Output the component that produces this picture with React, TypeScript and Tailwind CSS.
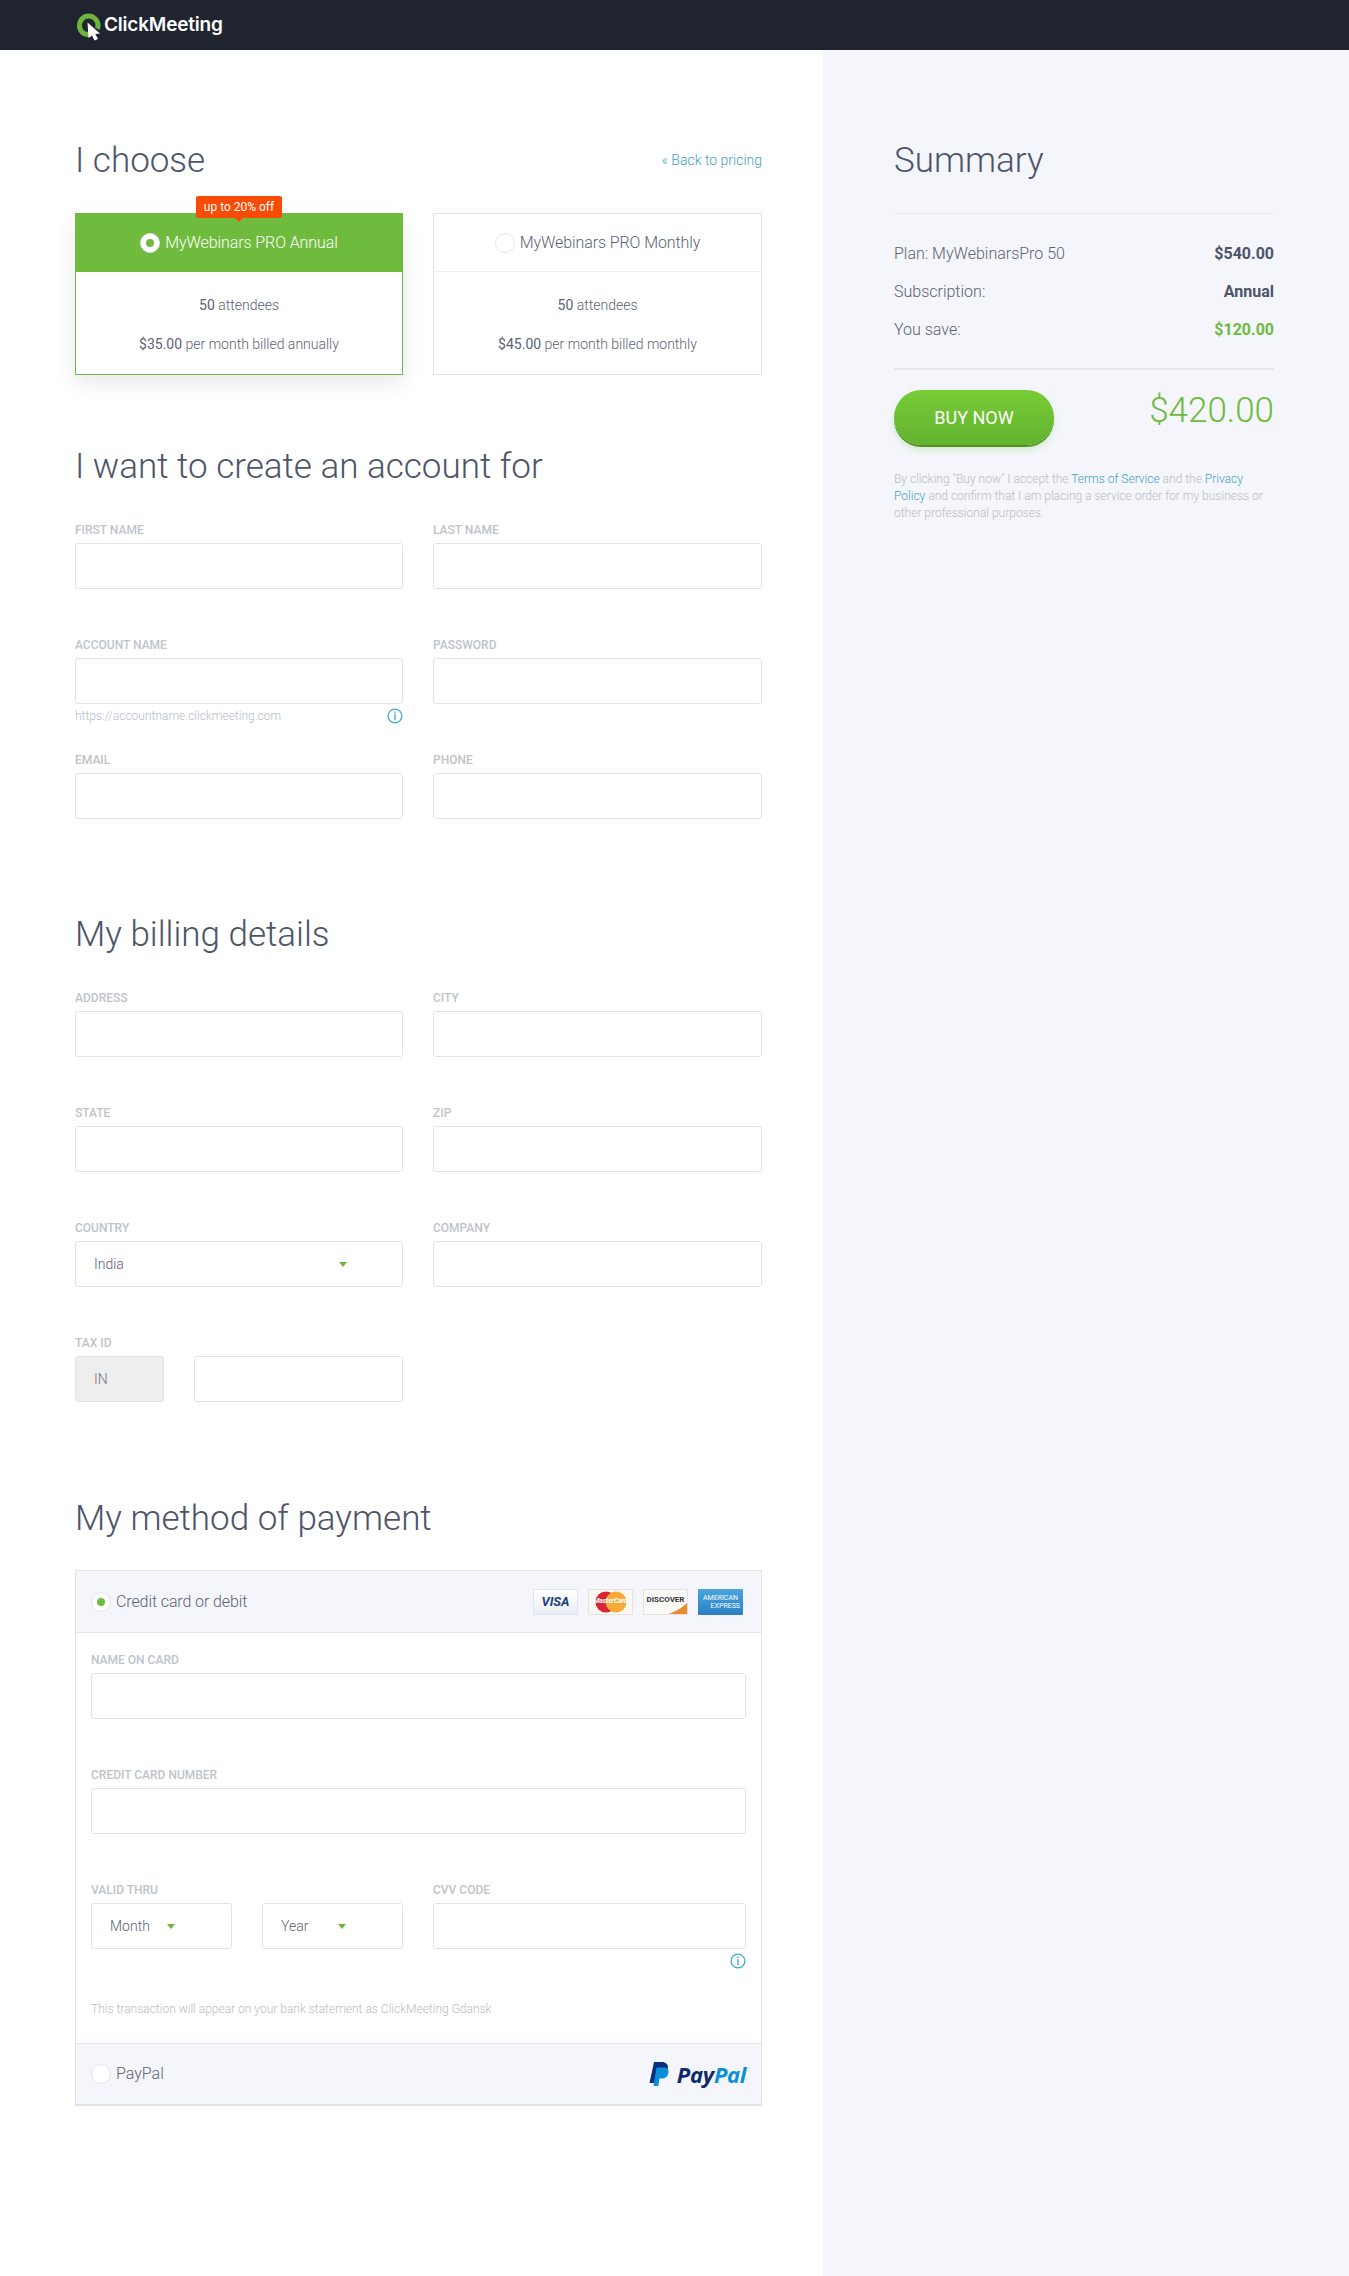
import React from 'react';

const Label = ({ children }: { children: React.ReactNode }) => (
    <div className="h-[14px] mb-[6px] text-[12px] leading-[14px] font-medium uppercase text-[#c0c3ca]">{children}</div>
);

const Input = () => (
    <input className="block w-full h-[46px] bg-white border border-[#e1e3e7] rounded-[3px] outline-none" />
);

const Info = () => (
    <svg width="16" height="16" viewBox="0 0 16 16" fill="none" className="shrink-0">
        <circle cx="8" cy="8" r="6.9" stroke="#3fa9cf" strokeWidth="1.3" />
        <rect x="7.3" y="3.6" width="1.4" height="1.5" fill="#3fa9cf" />
        <rect x="7.3" y="6.2" width="1.4" height="6" fill="#3fa9cf" />
    </svg>
);

const Field = ({ label, hint }: { label: string; hint?: string }) => (
    <div>
        <Label>{label}</Label>
        <Input />
        {hint && (
            <div className="mt-[12px] -mb-[12px] h-0 flex items-center justify-between text-[12px] font-light text-[#b9bcc4]">
                <span>{hint}</span>
                <Info />
            </div>
        )}
    </div>
);

const Arrow = () => <div className="w-0 h-0 border-x-[4px] border-x-transparent border-t-[5px] border-t-[#6fb43f]" />;

const SelectBox = ({ value, arrowClass }: { value: string; arrowClass: string }) => (
    <div className="flex items-center h-[46px] pl-[18px] bg-white border border-[#e1e3e7] rounded-[3px] text-[14px] font-light text-[#5c6274]">
        <span>{value}</span>
        <span className={arrowClass}><Arrow /></span>
    </div>
);

const Heading = ({ children, className }: { children: React.ReactNode; className?: string }) => (
    <h2 className={`h-[40px] text-[35px] leading-[42px] font-light text-[#4d5469] ${className ?? ''}`}>{children}</h2>
);

const Radio = ({ dot }: { dot?: string }) => (
    <span className="flex items-center justify-center w-[20px] h-[20px] rounded-full bg-white border border-[#e3e5ea] shrink-0">
        {dot && <span className={`w-[8px] h-[8px] rounded-full ${dot}`} />}
    </span>
);

const Logo = () => (
    <div className="flex items-center h-[50px] pl-[76px]">
        <svg width="28" height="28" viewBox="0 0 28 28" fill="none" className="mt-[3px]">
            <path d="M13 21.500C7 22 3.500 17.500 3.500 12.500 3.500 7 7.500 3 12.500 3s9.500 4 9.500 9.500c0 1.300-.2 2.300-.6 3.300" stroke="#6cb33f" strokeWidth="5" />
            <path d="M11.500 9.500 24 20.500 19.300 21 22 26 18.500 27.500 16 22.500 12.500 25Z" fill="#fff" />
        </svg>
        <span className="text-[19px] leading-[50px] font-semibold text-white tracking-[-0.2px] font-['Inter',sans-serif]">ClickMeeting</span>
    </div>
);

const PlanCard = ({ active, name, price, billed }: { active?: boolean; name: string; price: string; billed: string }) => (
    <div className={`relative h-[162px] bg-white border ${active ? 'border-[#6fbb3d] shadow-[0_8px_18px_rgba(60,70,90,0.12)]' : 'border-[#e1e3e7]'}`}>
        {active && (
            <div className="absolute -top-[18px] left-1/2 -translate-x-1/2 flex items-center justify-center w-[86px] h-[22px] rounded-[2px] bg-[#f84c06] text-[12px] text-white z-10">
                up to 20% off
                <span className="absolute left-1/2 -translate-x-1/2 top-[22px] w-0 h-0 border-x-[4px] border-x-transparent border-t-[4px] border-t-[#f84c06]" />
            </div>
        )}
        <div className={`flex items-center justify-center gap-[5px] h-[58px] text-[16px] font-light tracking-[-0.1px] ${active ? 'bg-[#6fbb3d] text-white' : 'border-b border-[#eceef1] text-[#5c6274]'}`}>
            {active ? <Radio dot="bg-[#6fbb3d]" /> : <Radio />}
            <span>{name}</span>
        </div>
        <div className="flex flex-col items-center pt-[25px] gap-[22px] text-[14px] leading-[17px] font-light text-[#5c6274]">
            <div><span className="font-normal">50</span> attendees</div>
            <div><span className="font-normal">{price}</span> {billed}</div>
        </div>
    </div>
);

const SummaryRow = ({ label, value, valueClass }: { label: string; value: string; valueClass: string }) => (
    <div className="flex justify-between h-[38px] items-center text-[16px]">
        <span className="font-light text-[#5c6274]">{label}</span>
        <span className={`font-bold ${valueClass}`}>{value}</span>
    </div>
);

const CardLogos = () => (
    <div className="flex gap-[10px] mr-[18px]">
        <div className="flex items-center justify-center w-[45px] h-[26px] rounded-[1px] border border-[#e2e5ea] bg-gradient-to-b from-white to-[#e9eef4] text-[13px] font-bold italic text-[#1d3f7f]">VISA</div>
        <div className="relative flex items-center justify-center w-[45px] h-[26px] rounded-[1px] border border-[#e5e3df] bg-[#fbf8f3]">
            <svg width="32" height="22" viewBox="0 0 32 22">
                <circle cx="11" cy="11" r="10.500" fill="#dc2433" />
                <circle cx="21" cy="11" r="10.500" fill="#f5ab3a" />
            </svg>
            <span className="absolute inset-0 flex items-center justify-center text-[7px] italic font-bold text-white tracking-[-0.2px]">MasterCard</span>
        </div>
        <div className="relative flex items-center justify-center w-[45px] h-[26px] rounded-[1px] border border-[#e5e3df] bg-[#fbf9f5] text-[8px] font-bold text-[#33343a] overflow-hidden pb-[3px]">
            DISCOVER
            <svg width="45" height="26" viewBox="0 0 45 26" className="absolute inset-0">
                <path d="M45 11V26H16C28 24 38 19 45 11Z" fill="#ec8a2c" />
            </svg>
        </div>
        <div className="flex flex-col items-center justify-center w-[45px] h-[26px] rounded-[1px] bg-gradient-to-b from-[#4aa5de] to-[#2a7fc2] text-[7px] leading-[8px] font-normal text-white">
            <span>AMERICAN</span>
            <span className="self-end mr-[3px]">EXPRESS</span>
        </div>
    </div>
);

const PayPalLogo = () => (
    <div className="flex items-center gap-[8px]">
        <svg width="21" height="24" viewBox="0 0 21 24">
            <path d="M6 0h7.500C18 0 20.500 2.300 19.800 6.200 19 11 16 13.500 11.500 13.500H8.500L7 21H1.500Z" fill="#0a2f7c" />
            <path d="M8.500 5.500h6.500C19 5.500 21 7.500 20.500 10.500 19.800 14.500 17 16.500 13.500 16.500H11.500L10.300 24H5.500Z" fill="#0a8fd8" />
        </svg>
        <span className="text-[22px] leading-[24px] font-bold italic text-[#0d2a6d] font-['Open_Sans',sans-serif] tracking-[-0.3px]">Pay<span className="text-[#0a8fd8]">Pal</span></span>
    </div>
);

export default function App() {
    return (
        <div className="min-h-[2276px] flex flex-col bg-white font-['Roboto',sans-serif]">
            {/* Top bar */}
            <header className="h-[50px] bg-[#20242f]">
                <Logo />
            </header>

            <div className="flex flex-1">
                {/* Checkout form */}
                <main className="w-[823px] pl-[75px] pr-[61px] pt-[90px]">
                    <div className="flex items-center justify-between mb-[33px]">
                        <Heading>I choose</Heading>
                        <a className="text-[14px] font-light text-[#3f9fc6]">« Back to pricing</a>
                    </div>
                    <div className="grid grid-cols-[328px_329px] gap-x-[30px]">
                        <PlanCard active name="MyWebinars PRO Annual" price="$35.00" billed="per month billed annually" />
                        <PlanCard name="MyWebinars PRO Monthly" price="$45.00" billed="per month billed monthly" />
                    </div>

                    <Heading className="mt-[71px] mb-[37px]">I want to create an account for</Heading>
                    <div className="grid grid-cols-[328px_329px] gap-x-[30px] gap-y-[49px]">
                        <Field label="First name" />
                        <Field label="Last name" />
                        <Field label="Account name" hint="https://accountname.clickmeeting.com" />
                        <Field label="Password" />
                        <Field label="Email" />
                        <Field label="Phone" />
                    </div>

                    <Heading className="mt-[95px] mb-[37px]">My billing details</Heading>
                    <div className="grid grid-cols-[328px_329px] gap-x-[30px] gap-y-[49px]">
                        <Field label="Address" />
                        <Field label="City" />
                        <Field label="State" />
                        <Field label="Zip" />
                        <div>
                            <Label>Country</Label>
                            <SelectBox value="India" arrowClass="ml-[215px]" />
                        </div>
                        <Field label="Company" />
                        <div>
                            <Label>Tax ID</Label>
                            <div className="flex gap-[30px]">
                                <div className="flex items-center w-[89px] h-[46px] pl-[18px] shrink-0 bg-[#eeeeef] border border-[#e1e3e7] rounded-[3px] text-[14px] font-light text-[#6b7080]">IN</div>
                                <Input />
                            </div>
                        </div>
                    </div>

                    <Heading className="mt-[96px] mb-[32px]">My method of payment</Heading>
                    <div className="border-x border-[#e1e3e7]">
                        <div className="flex items-center justify-between h-[63px] pl-[15px] bg-[#f4f6fb] border-y border-[#e1e3e7]">
                            <div className="flex items-center gap-[5px] text-[16px] font-light text-[#5c6274] tracking-[-0.1px]">
                                <Radio dot="bg-[#6fbb3d]" />
                                <span>Credit card or debit</span>
                            </div>
                            <CardLogos />
                        </div>
                        <div className="px-[15px] pt-[20px]">
                            <Field label="Name on card" />
                            <div className="mt-[49px]">
                                <Field label="Credit card number" />
                            </div>
                            <div className="mt-[49px] grid grid-cols-[312px_313px] gap-x-[30px]">
                                <div>
                                    <Label>Valid thru</Label>
                                    <div className="grid grid-cols-2 gap-x-[30px]">
                                        <SelectBox value="Month" arrowClass="ml-[17px]" />
                                        <SelectBox value="Year" arrowClass="ml-[30px]" />
                                    </div>
                                </div>
                                <div>
                                    <Field label="CVV code" />
                                    <div className="flex justify-end mt-[4px] h-[16px]"><Info /></div>
                                </div>
                            </div>
                            <p className="mt-[31px] h-[43px] text-[12px] font-light text-[#b9bcc4]">This transaction will appear on your bank statement as ClickMeeting Gdansk</p>
                        </div>
                        <div className="flex items-center justify-between h-[63px] px-[15px] bg-[#f4f6fb] border-t border-b-2 border-[#e1e3e7]">
                            <div className="flex items-center gap-[5px] text-[16px] font-light text-[#5c6274]">
                                <Radio />
                                <span>PayPal</span>
                            </div>
                            <PayPalLogo />
                        </div>
                    </div>
                </main>

                {/* Order summary */}
                <aside className="flex-1 bg-[#f4f6fb] pl-[71px] pr-[75px] pt-[90px]">
                    <h2 className="h-[40px] text-[35px] leading-[42px] font-light text-[#4d5469] mb-[33px]">Summary</h2>
                    <div className="border-t border-[#e4e6ec] pt-[21px] pb-[19px]">
                        <SummaryRow label="Plan: MyWebinarsPro 50" value="$540.00" valueClass="text-[#4d5469]" />
                        <SummaryRow label="Subscription:" value="Annual" valueClass="text-[#4d5469]" />
                        <SummaryRow label="You save:" value="$120.00" valueClass="text-[#6fbb3d]" />
                    </div>
                    <div className="border-t-2 border-[#e4e6ec] pt-[20px] flex justify-between">
                        <button className="w-[160px] h-[55px] rounded-full bg-gradient-to-b from-[#78cd36] to-[#62b22e] shadow-[0_2px_0_#4f9326,0_5px_6px_rgba(110,190,60,0.25)] text-white text-[18px] font-normal">BUY NOW</button>
                        <div className="text-[35px] leading-[42px] font-light text-[#6fbb3d]">$420.00</div>
                    </div>
                    <p className="mt-[26px] text-[12px] leading-[17px] font-light text-[#b9bcc4]">
                        By clicking "Buy now" I accept the <a className="text-[#3f9fc6]">Terms of Service</a> and the <a className="text-[#3f9fc6]">Privacy Policy</a> and confirm that I am placing a service order for my business or other professional purposes.
                    </p>
                </aside>
            </div>
        </div>
    );
}
